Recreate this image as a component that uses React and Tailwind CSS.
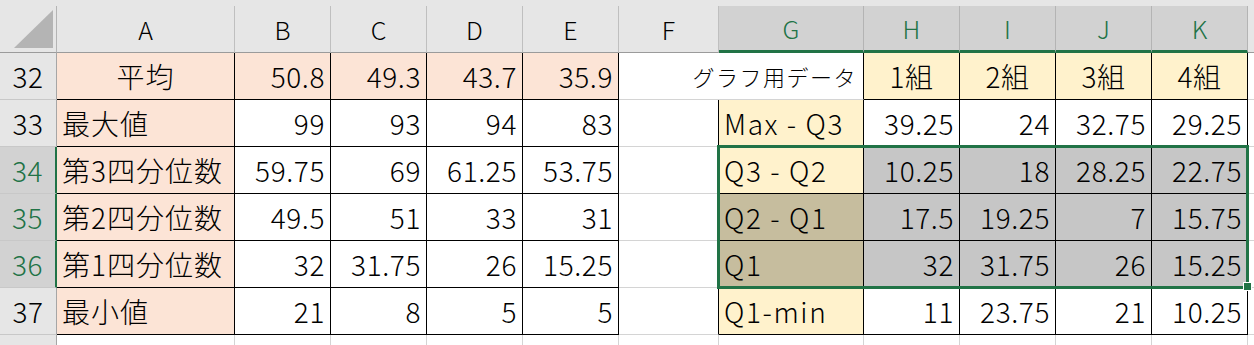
import React from "react";

const COLS = ["A", "B", "C", "D", "E", "F", "G", "H", "I", "J", "K"];

const DATA = {
  32: ["平均", "50.8", "49.3", "43.7", "35.9", "", "グラフ用データ", "1組", "2組", "3組", "4組"],
  33: ["最大値", "99", "93", "94", "83", "", "Max - Q3", "39.25", "24", "32.75", "29.25"],
  34: ["第3四分位数", "59.75", "69", "61.25", "53.75", "", "Q3 - Q2", "10.25", "18", "28.25", "22.75"],
  35: ["第2四分位数", "49.5", "51", "33", "31", "", "Q2 - Q1", "17.5", "19.25", "7", "15.75"],
  36: ["第1四分位数", "32", "31.75", "26", "15.25", "", "Q1", "32", "31.75", "26", "15.25"],
  37: ["最小値", "21", "8", "5", "5", "", "Q1-min", "11", "23.75", "21", "10.25"],
};

const boxed = (r, c) =>
  (r >= 32 && r <= 37 && c >= 1 && c <= 5) ||
  (r >= 33 && r <= 37 && c === 7) ||
  (r >= 32 && r <= 37 && c >= 8 && c <= 11);

const bgFor = (r, c) => {
  if (r > 37) return "bg-white";
  if (c === 1) return "bg-[#fce4d6]";
  if (r === 32 && c >= 2 && c <= 5) return "bg-[#fce4d6]";
  if (c === 7 && r >= 33) return r === 35 || r === 36 ? "bg-[#c6bd9e]" : "bg-[#fff2cc]";
  if (r === 32 && c >= 8 && c <= 11) return "bg-[#fff2cc]";
  if (r >= 34 && r <= 36 && c >= 8 && c <= 11) return "bg-[#c6c6c6]";
  return "bg-white";
};

const alignFor = (r, c) => {
  if (c === 1) return r === 32 ? "justify-center tracking-[1px]" : "justify-start tracking-[1px]";
  if (c === 7) return "justify-start tracking-[1.6px]";
  if (r === 32 && c >= 8) return "justify-center tracking-[0.6px]";
  return "justify-end tracking-[0.6px]";
};

function Cell({ r, c }) {
  const rb = boxed(r, c) || boxed(r, c + 1);
  const bb = boxed(r, c) || boxed(r + 1, c);
  const text = DATA[r] ? DATA[r][c - 1] : "";
  return (
    <div
      className={
        "flex items-center px-[5px] border-r border-b whitespace-nowrap " +
        (rb ? "border-r-black " : "border-r-[#d4d4d4] ") +
        (bb ? "border-b-black " : "border-b-[#d4d4d4] ") +
        bgFor(r, c) +
        " " +
        alignFor(r, c)
      }
    >
      {text}
    </div>
  );
}

export default function App() {
  const rows = [32, 33, 34, 35, 36, 37];
  return (
    <div className="relative w-[1254px] h-[345px] overflow-hidden bg-white font-['Noto_Sans_CJK_JP','Noto_Sans',sans-serif] font-light text-black">
      <div className="grid grid-cols-[57px_178px_96px_96px_96px_96px_100px_145px_96px_96px_96px_96px_6px] grid-rows-[6px_47px_47px_47px_47px_47px_47px_47px_10px] text-[28px] leading-none">
        {/* top strip */}
        <div className="col-span-13 bg-[#e6e6e6]" />

        {/* header row */}
        <div className="relative bg-[#e6e6e6] border-r border-b border-r-[#b4b4b4] border-b-[#9b9b9b]">
          <svg className="absolute left-0 top-0" width="56" height="46" viewBox="0 0 56 46">
            <polygon points="14,42 53,42 53,4" fill="#b4b4b4" />
          </svg>
        </div>
        {COLS.map((l, i) => {
          const sel = i >= 6;
          return (
            <div
              key={l}
              className={
                "flex items-center justify-center text-[25px] border-r " +
                (sel
                  ? "bg-[#d2d2d2] text-[#217346] border-r-[#b4b4b4] border-b-[3px] border-b-[#217346]"
                  : "bg-[#e6e6e6] text-black border-r-[#bfbfbf] border-b border-b-[#9b9b9b]")
              }
            >
              {l}
            </div>
          );
        })}
        <div className="bg-[#e6e6e6] border-b border-b-[#9b9b9b]" />

        {rows.map((r) => {
          const sel = r >= 34 && r <= 36;
          return (
            <React.Fragment key={r}>
              <div
                className={
                  "flex items-center justify-center tracking-[0.6px] border-b border-b-[#c8c8c8] " +
                  (sel
                    ? "bg-[#d2d2d2] text-[#217346] border-r-2 border-r-[#217346]"
                    : "bg-[#e6e6e6] text-black border-r border-r-[#a6a6a6]")
                }
              >
                {r}
              </div>
              {r === 32 ? (
                <>
                  {[1, 2, 3, 4, 5].map((c) => (
                    <Cell key={c} r={r} c={c} />
                  ))}
                  <div className="col-span-2 flex items-center justify-end pr-[6px] whitespace-nowrap text-[22px] tracking-[1.5px] bg-white border-r border-b border-r-black border-b-[#d4d4d4]">
                    グラフ用データ
                  </div>
                  {[8, 9, 10, 11].map((c) => (
                    <Cell key={c} r={r} c={c} />
                  ))}
                </>
              ) : (
                [1, 2, 3, 4, 5, 6, 7, 8, 9, 10, 11].map((c) => <Cell key={c} r={r} c={c} />)
              )}
              <div className="bg-white border-b border-b-[#d4d4d4]" />
            </React.Fragment>
          );
        })}

        {/* row 38 partial */}
        <div className="bg-[#e6e6e6] border-r border-r-[#a6a6a6]" />
        {[1, 2, 3, 4, 5, 6, 7, 8, 9, 10, 11].map((c) => (
          <div key={c} className="bg-white border-r border-r-[#d4d4d4]" />
        ))}
        <div className="bg-white" />
      </div>

      {/* selection overlay */}
      <div className="absolute left-[717px] top-[145px] w-[532px] h-[144px] border-[3px] border-[#217346] pointer-events-none" />
      <div className="absolute left-[1243px] top-[282px] w-[9px] h-[9px] bg-[#217346] border border-white" />
    </div>
  );
}
